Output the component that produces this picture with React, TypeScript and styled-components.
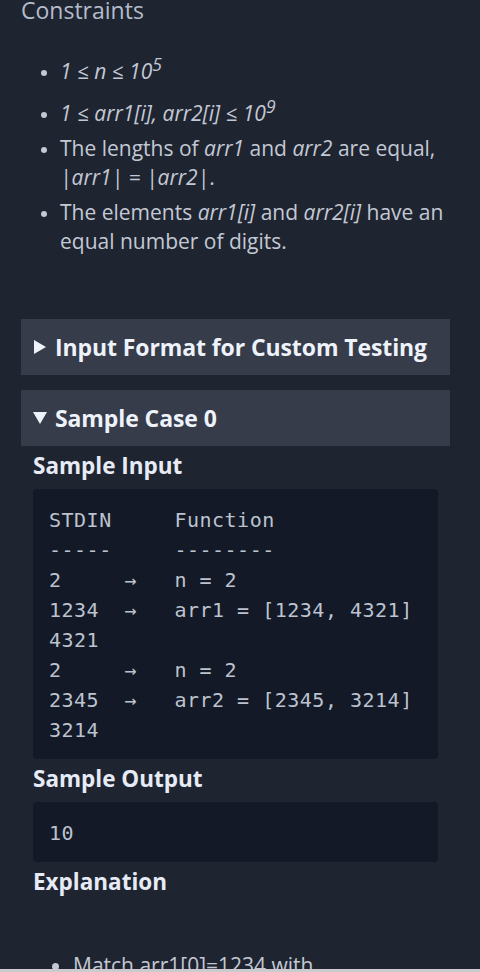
import React from "react";
import styled, { createGlobalStyle } from "styled-components";

const Global = createGlobalStyle`
  html, body {
    margin: 0;
    padding: 0;
    background: #1f2431;
    overflow: hidden;
  }
  body {
    font-family: "Open Sans", "Noto Sans", sans-serif;
    color: #c3c9d4;
  }
`;

const Page = styled.div`
  width: 480px;
  height: 972px;
  overflow: hidden;
  box-sizing: border-box;
  padding: 0 30px 0 21px;
  position: relative;
`;

const SectionTitle = styled.h3`
  margin: -5px 0 0;
  font-size: 23px;
  font-weight: 400;
  line-height: 30px;
  color: #b4bccb;
`;

const BulletList = styled.ul`
  margin: 25px 0 0;
  padding-left: 39px;
  list-style: disc;
  font-size: 21px;
  line-height: 29px;
  color: #c3c9d4;
`;

const Item = styled.li`
  margin-bottom: 6px;
  &:last-child {
    margin-bottom: 0;
  }
  &::marker {
    font-size: 17px;
  }
`;

const Em = styled.em`
  font-style: italic;
`;

const Sup = styled.sup`
  font-size: smaller;
`;

const Accordions = styled.div`
  margin-top: 63px;
  display: flex;
  flex-direction: column;
  gap: 15px;
`;

const AccordionHeader = styled.div`
  height: 56px;
  background: #373c4b;
  display: flex;
  align-items: center;
  gap: 8px;
  padding: 0 12px;
  font-size: 23px;
  font-weight: 700;
  color: #eef2fa;
  letter-spacing: -0.1px;
`;

const Caret = styled.svg`
  width: 14px;
  height: 14px;
  flex: none;
  fill: #eef2fa;
`;

const Body = styled.div`
  padding: 0 12px;
`;

const SubHead = styled.h4`
  margin: 6px 0 9px;
  font-size: 22.5px;
  font-weight: 700;
  line-height: 28px;
  color: #e6ebf5;
`;

const Code = styled.pre`
  margin: 0;
  background: #131927;
  border-radius: 4px;
  padding: 16px 16px 14px;
  font-family: "DejaVu Sans Mono", monospace;
  font-size: 20px;
  line-height: 30px;
  letter-spacing: 0.5px;
  color: #bcc3cf;
  white-space: pre;
`;

const SubList = styled.ul`
  margin: 55px 0 0;
  padding-left: 40px;
  font-size: 21px;
  line-height: 29px;
`;

const BottomBar = styled.div`
  position: absolute;
  left: 0;
  right: 0;
  bottom: 0;
  height: 3px;
  background: #c9cbcf;
`;

function Right() {
  return (
    <Caret viewBox="0 0 14 14">
      <polygon points="1,0 13,7 1,14" />
    </Caret>
  );
}

function Down() {
  return (
    <Caret viewBox="0 0 14 14">
      <polygon points="0,1 14,1 7,13" />
    </Caret>
  );
}

export default function App() {
  return (
    <>
      <Global />
      <Page>
        <SectionTitle>Constraints</SectionTitle>
        <BulletList>
          <Item>
            <Em>
              1 ≤ n ≤ 10<Sup>5</Sup>
            </Em>
          </Item>
          <Item>
            <Em>
              1 ≤ arr1[i], arr2[i] ≤ 10<Sup>9</Sup>
            </Em>
          </Item>
          <Item>
            The lengths of <Em>arr1</Em> and <Em>arr2</Em> are equal,{" "}
            <Em>|arr1| = |arr2|</Em>.
          </Item>
          <Item>
            The elements <Em>arr1[i]</Em> and <Em>arr2[i]</Em> have an equal
            number of digits.
          </Item>
        </BulletList>
        <Accordions>
          <AccordionHeader>
            <Right />
            Input Format for Custom Testing
          </AccordionHeader>
          <div>
            <AccordionHeader>
              <Down />
              Sample Case 0
            </AccordionHeader>
            <Body>
              <SubHead>Sample Input</SubHead>
              <Code>{`STDIN     Function
-----     --------
2     →   n = 2
1234  →   arr1 = [1234, 4321]
4321
2     →   n = 2
2345  →   arr2 = [2345, 3214]
3214`}</Code>
              <SubHead>Sample Output</SubHead>
              <Code>10</Code>
              <SubHead>Explanation</SubHead>
              <SubList>
                <li>Match arr1[0]=1234 with arr2[1]=3214.</li>
              </SubList>
            </Body>
          </div>
        </Accordions>
        <BottomBar />
      </Page>
    </>
  );
}
